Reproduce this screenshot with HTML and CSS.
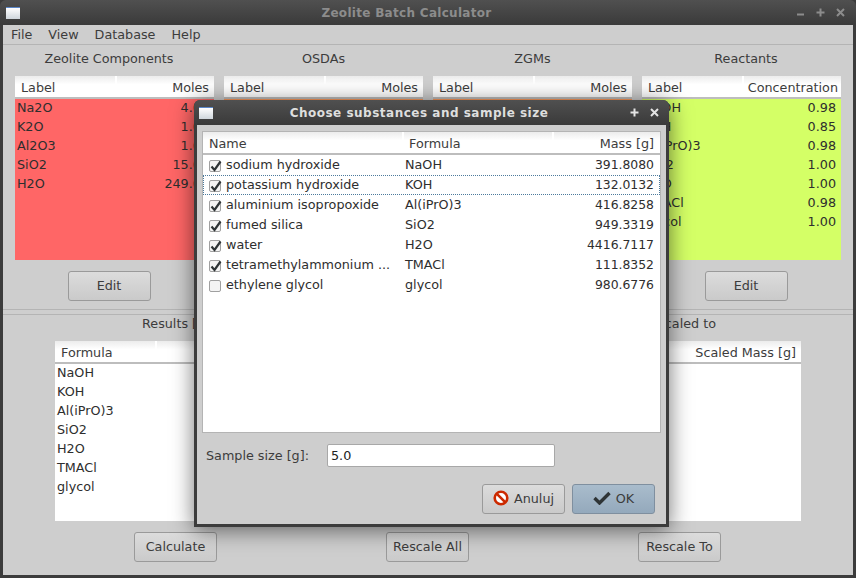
FILE: index.html
```html
<!DOCTYPE html>
<html lang="en">
<head>
<meta charset="utf-8">
<title>Zeolite Batch Calculator</title>
<link rel="stylesheet" href="styles.css">
</head>
<body>
<svg class="defs" width="0" height="0">
  <symbol id="chk" viewBox="0 0 13 13"><path d="M2.5 6.5 L5.5 10 L11.5 1.5" fill="none" stroke="#2e3436" stroke-width="2.2"/></symbol>
</svg>
<div class="window">
  <header class="titlebar">
    <span class="winicon"></span>
    <span class="title">Zeolite Batch Calculator</span>
    <span class="wm wm-main">
      <svg width="9" height="9" viewBox="0 0 9 9"><path d="M1 6.5H8" stroke="currentColor" stroke-width="2"/></svg>
      <svg width="9" height="9" viewBox="0 0 9 9"><path d="M0.5 4.5H8.5M4.5 0.5V8.5" stroke="currentColor" stroke-width="2"/></svg>
      <svg width="9" height="9" viewBox="0 0 9 9"><path d="M1 1L8 8M8 1L1 8" stroke="currentColor" stroke-width="2"/></svg>
    </span>
  </header>
  <div class="client">
    <nav class="menubar"><span>File</span><span>View</span><span>Database</span><span>Help</span></nav>
    <section class="top">
      <div class="panel">
        <h2>Zeolite Components</h2>
        <div class="table">
          <div class="thead"><span>Label</span><span class="r">Moles</span></div>
          <div class="tbody red">
            <div class="row"><span>Na2O</span><span>4.00</span></div>
            <div class="row"><span>K2O</span><span>1.00</span></div>
            <div class="row"><span>Al2O3</span><span>1.00</span></div>
            <div class="row"><span>SiO2</span><span>15.00</span></div>
            <div class="row"><span>H2O</span><span>249.00</span></div>
          </div>
        </div>
        <button class="btn">Edit</button>
      </div>
      <div class="panel">
        <h2>OSDAs</h2>
        <div class="table">
          <div class="thead"><span>Label</span><span class="r">Moles</span></div>
          <div class="tbody orange"></div>
        </div>
        <button class="btn">Edit</button>
      </div>
      <div class="panel">
        <h2>ZGMs</h2>
        <div class="table">
          <div class="thead"><span>Label</span><span class="r">Moles</span></div>
          <div class="tbody orange"></div>
        </div>
        <button class="btn">Edit</button>
      </div>
      <div class="panel">
        <h2>Reactants</h2>
        <div class="table">
          <div class="thead"><span>Label</span><span class="r">Concentration</span></div>
          <div class="tbody green">
            <div class="row"><span>NaOH</span><span>0.98</span></div>
            <div class="row"><span>KOH</span><span>0.85</span></div>
            <div class="row"><span>Al(iPrO)3</span><span>0.98</span></div>
            <div class="row"><span>SiO2</span><span>1.00</span></div>
            <div class="row"><span>H2O</span><span>1.00</span></div>
            <div class="row"><span>TMACl</span><span>0.98</span></div>
            <div class="row"><span>glycol</span><span>1.00</span></div>
          </div>
        </div>
        <button class="btn">Edit</button>
      </div>
    </section>
    <div class="splitter"></div>
    <section class="bottom">
      <div class="labels"><span>Results [g]</span><span>Scaled to</span></div>
      <div class="table results">
        <div class="thead"><span>Formula</span><span class="r">Scaled Mass [g]</span></div>
        <div class="tbody white">
          <div class="row"><span>NaOH</span></div>
          <div class="row"><span>KOH</span></div>
          <div class="row"><span>Al(iPrO)3</span></div>
          <div class="row"><span>SiO2</span></div>
          <div class="row"><span>H2O</span></div>
          <div class="row"><span>TMACl</span></div>
          <div class="row"><span>glycol</span></div>
        </div>
      </div>
      <div class="actions">
        <button class="btn">Calculate</button>
        <button class="btn">Rescale All</button>
        <button class="btn">Rescale To</button>
      </div>
    </section>
  </div>
</div>

<div class="dialog">
  <header class="titlebar dlgbar">
    <span class="winicon"></span>
    <span class="title dlgtitle">Choose substances and sample size</span>
    <span class="wm wm-dlg">
      <svg width="9" height="9" viewBox="0 0 9 9"><path d="M0.5 4.5H8.5M4.5 0.5V8.5" stroke="currentColor" stroke-width="2"/></svg>
      <svg width="9" height="9" viewBox="0 0 9 9"><path d="M1 1L8 8M8 1L1 8" stroke="currentColor" stroke-width="2"/></svg>
    </span>
  </header>
  <div class="dlgbody">
    <div class="list">
      <div class="lhead lgrid"><span>Name</span><span>Formula</span><span class="r">Mass [g]</span></div>
      <div class="lrow lgrid"><span class="name"><i class="cb"><svg width="13" height="13"><use href="#chk"/></svg></i>sodium hydroxide</span><span>NaOH</span><span class="r num">391.8080</span></div>
      <div class="lrow lgrid focus"><span class="name"><i class="cb"><svg width="13" height="13"><use href="#chk"/></svg></i>potassium hydroxide</span><span>KOH</span><span class="r num">132.0132</span></div>
      <div class="lrow lgrid"><span class="name"><i class="cb"><svg width="13" height="13"><use href="#chk"/></svg></i>aluminium isopropoxide</span><span>Al(iPrO)3</span><span class="r num">416.8258</span></div>
      <div class="lrow lgrid"><span class="name"><i class="cb"><svg width="13" height="13"><use href="#chk"/></svg></i>fumed silica</span><span>SiO2</span><span class="r num">949.3319</span></div>
      <div class="lrow lgrid"><span class="name"><i class="cb"><svg width="13" height="13"><use href="#chk"/></svg></i>water</span><span>H2O</span><span class="r num">4416.7117</span></div>
      <div class="lrow lgrid"><span class="name"><i class="cb"><svg width="13" height="13"><use href="#chk"/></svg></i>tetramethylammonium ...</span><span>TMACl</span><span class="r num">111.8352</span></div>
      <div class="lrow lgrid"><span class="name"><i class="cb"></i>ethylene glycol</span><span>glycol</span><span class="r num">980.6776</span></div>
    </div>
    <div class="sample"><label>Sample size [g]:</label><div class="input">5.0</div></div>
    <div class="dlgactions">
      <button class="btn iconbtn">
        <svg width="16" height="16" viewBox="0 0 16 16"><circle cx="8" cy="8" r="6.3" fill="#fff" stroke="#cc2a00" stroke-width="2.6"/><path d="M3.6 3.6L12.4 12.4" stroke="#cc2a00" stroke-width="2.6"/></svg>
        Anuluj
      </button>
      <button class="btn iconbtn ok">
        <svg width="18" height="14" viewBox="0 0 18 14"><path d="M1.5 7L6.5 12L16.5 2" fill="none" stroke="#2e3436" stroke-width="3.4"/></svg>
        OK
      </button>
    </div>
  </div>
</div>
</body>
</html>
```
FILE: styles.css
```css
* { box-sizing: border-box; }
html, body { margin: 0; padding: 0; }
body {
  width: 856px; height: 578px; overflow: hidden; position: relative;
  font-family: "DejaVu Sans", sans-serif; font-size: 12.75px; color: #3c3c3c;
  background: #3c3c3c;
}
.defs { position: absolute; }
.window { width: 856px; height: 578px; display: flex; flex-direction: column; background: #3c3c3c; border-radius: 6px 6px 0 0; }
.titlebar {
  height: 25px; flex: none; display: flex; align-items: center;
  background: linear-gradient(#505050, #3a3a3a);
  border-radius: 6px 6px 0 0; padding-left: 6px;
}
.winicon {
  width: 14px; height: 12px; flex: none;
  background: linear-gradient(#fff, #cfd6dc); border-top: 1px solid #5a86c8;
}
.title {
  flex: 1; text-align: center; padding-right: 3px;
  font-weight: bold; font-size: 12px; color: #8c8c8c; letter-spacing: 0.3px;
}
.wm { display: flex; align-items: center; flex: none; width: 60px; }
.wm-main { gap: 11px; color: #8c8c8c; }
.wm-dlg { gap: 11px; color: #e4e4e4; width: 39px; }
.client { flex: 1; margin: 0 3px 3px; background: #cecece; display: flex; flex-direction: column; }
.menubar {
  height: 20px; flex: none; display: flex; gap: 16px; padding: 0 8px;
  align-items: center; border-bottom: 1px solid #b4b4b4; line-height: 18px;
}
.top { display: grid; grid-template-columns: repeat(4, 199px); column-gap: 10px; padding: 0 12px; height: 264px; flex: none; }
.panel { display: flex; flex-direction: column; align-items: center; }
h2 { margin: 0; font: inherit; height: 31px; line-height: 28px; text-align: center; }
.panel:first-child h2, .panel:first-child .btn { margin-right: 11px; }
.panel:last-child h2, .panel:last-child .btn { margin-left: 9px; }
.table { width: 100%; }
.thead {
  height: 23px; display: flex; justify-content: space-between; align-items: center;
  padding: 1px 5px 0 6px; border-bottom: 2px solid #bdbdbd;
  background:
    linear-gradient(#fff, #fff) 100px 0 / 2px 8px no-repeat,
    linear-gradient(#ececec, #fff 40%);
}
.panel:last-child .thead { padding-right: 3px; }
.tbody { height: 161px; color: #2e2e2e; }
.red { background: #ff6666; }
.orange { background: #ff9a5c; }
.green { background: #d4ff66; }
.white { background: #fff; height: 157px; }
.row { height: 19px; line-height: 18px; display: flex; justify-content: space-between; padding: 0 5px 0 2px; }
.btn {
  width: 83px; height: 30px; padding: 0 0 2px; font: inherit; color: #3c3c3c;
  border: 1px solid #9a9a9a; border-radius: 3px;
  background: linear-gradient(#dcdcdc, #cacaca);
}
.panel .btn { margin-top: 11px; }
.splitter { height: 6px; flex: none; border-top: 1px solid #b4b4b4; border-bottom: 1px solid #b4b4b4; }
.bottom { flex: 1; display: flex; flex-direction: column; align-items: center; }
.labels { width: 100%; height: 26px; display: flex; justify-content: space-between; padding: 0 137px 0 139px; line-height: 17px; }
.results { width: 746px; }
.actions { width: 100%; display: flex; padding-left: 131px; gap: 169px; margin-top: 11px; }

.dialog {
  position: absolute; left: 194px; top: 100px; width: 475px; height: 427px;
  background: #3c3c3c; border-radius: 6px 6px 0 0; display: flex; flex-direction: column;
  box-shadow: 0 3px 22px rgba(0,0,0,.55);
}
.dlgbar { padding-left: 5px; }
.dlgtitle { color: #dedede; letter-spacing: 0.5px; padding-right: 5px; }
.dlgbody { flex: 1; margin: 0 3px 3px; background: #cecece; display: flex; flex-direction: column; padding: 6px 5px 0; }
.list { height: 302px; background: #fff; border: 1px solid #b4b4b4; flex: none; }
.lgrid { display: grid; grid-template-columns: 197px 150px 1fr; align-items: center; }
.lhead {
  height: 23px; padding: 1px 6px 0 6px; border-bottom: 2px solid #bdbdbd;
  background:
    linear-gradient(#fff, #fff) 199px 0 / 2px 8px no-repeat,
    linear-gradient(#fff, #fff) 349px 0 / 2px 8px no-repeat,
    linear-gradient(#ececec, #fff 40%);
}
.lrow { height: 20px; padding: 0 6px 2px 5px; color: #2e2e2e; border: 1px solid transparent; border-width: 1px 0; }
.focus { border: 1px dotted #4c7a9c; padding-left: 4px; padding-right: 5px; }
.lhead span:nth-child(2) { padding-left: 3px; }
.r { text-align: right; }
.num { font-size: 12.4px; }
.name { display: flex; align-items: center; gap: 5px; white-space: nowrap; }
.cb {
  width: 12px; height: 12px; flex: none; margin-left: 1px; border: 1px solid #a0a0a0; border-radius: 2px;
  background: #f4f4f4; display: block; position: relative; top: 2px;
}
.cb svg { display: block; margin: -1px; }
.sample { display: flex; align-items: center; height: 24px; margin-top: 10px; padding-left: 4px; }
.sample label { width: 121px; flex: none; }
.input {
  width: 228px; height: 23px; background: #fff; border: 1px solid #a8a8a8; border-radius: 2px;
  padding-left: 3px; line-height: 21px; color: #222;
}
.dlgactions { display: flex; justify-content: flex-end; gap: 7px; margin-top: 17px; padding-right: 6px; }
.iconbtn { display: flex; align-items: center; justify-content: center; gap: 5px; }
.ok { background: linear-gradient(#a9bccc, #94a9bc); border-color: #7f8f9f; }
```
